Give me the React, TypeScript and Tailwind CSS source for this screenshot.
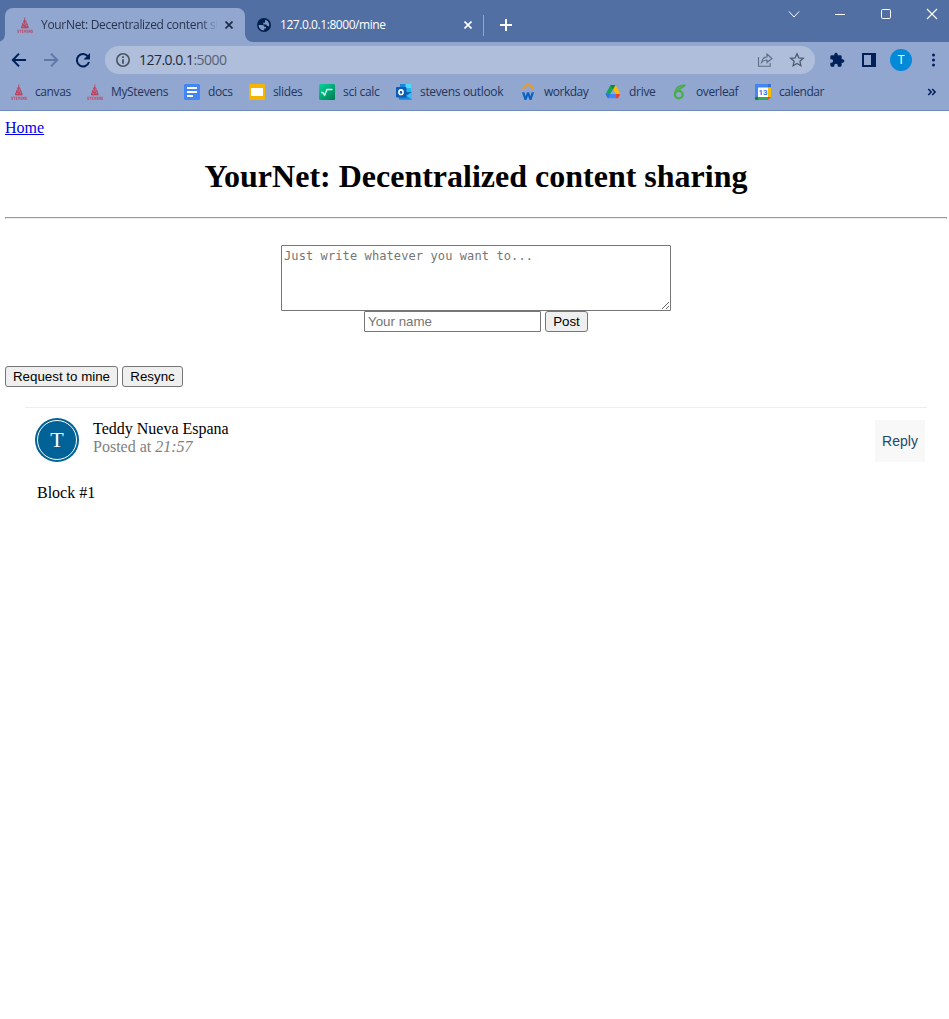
import React from "react";

function StevensIcon() {
  return (
    <svg width="16" height="16" viewBox="0 0 16 16" className="shrink-0">
      <g fill="#bb4563">
        <path d="M7.2 1.2L8.2 0v3l1.4 1.2v1.6l1.2 1.1v1.8l.8.9v1.3H4V9.4l1-1.1V6.6L6.2 5.8V4l1-.9z" />
        <path d="M4.3 11.2h7.2v.6H4.3z" opacity="0.6" />
        <g opacity="0.85">
          <path d="M.2 12.8h1.7v.7H1v.4h.9v1.8H.2V15h.9v-.4H.2zM2.4 12.8h2v.8h-.6v2.1H3v-2.1h-.6zM4.9 12.8h1.6v.7h-.8v.4h.7v.6h-.7v.5h.8v.7H4.9zM6.8 12.8h.8l.5 1.7.4-1.7h.8l-.8 2.9h-.9zM9.6 12.8h1.6v.7h-.8v.4h.7v.6h-.7v.5h.8v.7H9.6zM11.6 12.8h.7l.7 1.3v-1.3h.7v2.9H13l-.7-1.3v1.3h-.7zM14.1 12.8h1.7v.7h-.9v.4h.9v1.8h-1.7V15h.9v-.4h-.9z" />
        </g>
      </g>
      <path d="M6.3 5.6l1.2 2.2M8.8 4.4v3.2M5.6 9.4h1.6M9.4 8v1.6" stroke="#92a7d0" strokeWidth=".6" />
    </svg>
  );
}

function DocsIcon() {
  return (
    <svg width="16" height="16" className="shrink-0">
      <rect width="16" height="16" rx="1.2" fill="#4285f4" />
      <path d="M3 4h10M3 8h10M3 12h6" stroke="#fff" strokeWidth="2" />
    </svg>
  );
}

function SlidesIcon() {
  return (
    <svg width="16" height="16" className="shrink-0">
      <rect width="16" height="16" rx="1.2" fill="#f5b400" />
      <rect x="2" y="4" width="12" height="8" fill="#fff" />
    </svg>
  );
}

function CalcIcon() {
  return (
    <svg width="16" height="16" className="shrink-0">
      <defs>
        <linearGradient id="calc" x1="0" y1="0" x2="1" y2="1">
          <stop offset="0" stopColor="#00d898" />
          <stop offset="1" stopColor="#007a52" />
        </linearGradient>
      </defs>
      <rect width="16" height="16" rx="1.2" fill="url(#calc)" />
      <path d="M2.3 8.5h1.4l2 2.6L8 5.5h5.5" fill="none" stroke="#d8fff0" strokeWidth="1.3" />
    </svg>
  );
}

function OutlookIcon() {
  return (
    <svg width="16" height="16" className="shrink-0">
      <path d="M4 0h11v9H4z" fill="#1a86d8" />
      <path d="M9.5 0H15v4H9.5z" fill="#50d9ff" />
      <path d="M4 4h5.5v4H4z" fill="#0358a7" />
      <path d="M9.5 4H15v4H9.5z" fill="#28b4ee" />
      <path d="M3 15.8V11l7.5-1L16 15v.8z" fill="#1687dd" />
      <path d="M16 7.6v8L9.5 11.3z" fill="#38bdf2" />
      <path d="M9.5 8H16l-5.5 3.5z" fill="#1066b5" />
      <rect y="3" width="10.5" height="10.5" rx="1" fill="#0a5cb5" />
      <ellipse cx="5" cy="8.2" rx="2.1" ry="2.3" fill="none" stroke="#fff" strokeWidth="1.6" />
    </svg>
  );
}

function WorkdayIcon() {
  return (
    <svg width="16" height="16" className="shrink-0">
      <path d="M2.9 5.8C3.6 2.8 5.5 1 8 1s4.4 1.8 5.1 4.8" fill="none" stroke="#f49a18" strokeWidth="2" />
      <path d="M2 8.2h2.4l1.2 4.1L7 8.2h2.1l1.4 4.1 1.2-4.1H14L11.5 16H9.6L8 11.9 6.4 16H4.5z" fill="#0b62c4" />
    </svg>
  );
}

function DriveIcon() {
  return (
    <svg width="16" height="16" className="shrink-0">
      <path d="M5.5 1H8v4.4L3 14.2.6 10z" fill="#16a653" />
      <path d="M8 1h2.5l5 9h-4.9L8 5.4z" fill="#ffba00" />
      <path d="M5.5 1h5L8 5.4z" fill="#128444" />
      <path d="M.6 10h10v4.3H3z" fill="#4285f4" />
      <path d="M.6 10l2.4 4.3L5.4 10z" fill="#2a73e8" />
      <path d="M10.5 10h4.9L13 14.3h-2.5z" fill="#ea4335" />
      <path d="M8 5.4L10.6 10H5.3z" fill="#92a7d0" />
    </svg>
  );
}

function OverleafIcon() {
  return (
    <svg width="16" height="16" className="shrink-0">
      <ellipse cx="6.8" cy="10.6" rx="3.9" ry="3.8" fill="none" stroke="#47ad48" strokeWidth="2.2" />
      <path d="M2.9 10C2.8 6 5 1.2 12.8 1.2 11.8 3.6 8.2 3.6 6 6.2" fill="#47ad48" fillOpacity="0.35" stroke="#47ad48" strokeWidth="1.5" />
    </svg>
  );
}

function CalendarIcon() {
  return (
    <svg width="16" height="16" className="shrink-0">
      <path d="M0 1a1 1 0 0 1 1-1h14a1 1 0 0 1 1 1v3H0z" fill="#2f6fe0" />
      <path d="M0 1a1 1 0 0 1 1-1h12v13H0z" fill="#4285f4" />
      <path d="M13 3.3h3V13h-3z" fill="#fbbc04" />
      <path d="M0 13h13v3H1a1 1 0 0 1-1-1z" fill="#34a853" />
      <path d="M0 13h3v3H1a1 1 0 0 1-1-1z" fill="#188038" />
      <path d="M13 13h3l-3 3z" fill="#ea4335" />
      <path d="M3 3.5h10V13H3z" fill="#fff" />
      <text x="8" y="11" textAnchor="middle" fontSize="8" fontWeight="700" fontFamily="Roboto, sans-serif" fill="#2f75e8">13</text>
    </svg>
  );
}

const bookmarks = [
  { label: "canvas", icon: <StevensIcon />, style: "w-9 tracking-[-0.4px]" },
  { label: "MyStevens", icon: <StevensIcon />, style: "w-[57px] tracking-[-0.35px]" },
  { label: "docs", icon: <DocsIcon />, style: "w-[25px] tracking-[-0.35px]" },
  { label: "slides", icon: <SlidesIcon />, style: "w-[30px] tracking-[-0.35px]" },
  { label: "sci calc", icon: <CalcIcon />, style: "w-[37px] tracking-[-0.28px]" },
  { label: "stevens outlook", icon: <OutlookIcon />, style: "w-[84px] tracking-[-0.34px]" },
  { label: "workday", icon: <WorkdayIcon />, style: "w-[45px] tracking-[-0.5px]" },
  { label: "drive", icon: <DriveIcon />, style: "w-[27px] tracking-[-0.3px]" },
  { label: "overleaf", icon: <OverleafIcon />, style: "w-[43px] tracking-[-0.4px]" },
  { label: "calendar", icon: <CalendarIcon />, style: "w-[46px] tracking-[-0.42px]" },
];

function TabStrip() {
  return (
    <div className="flex h-[42px] bg-[#516fa3]">
      <svg width="5" height="42" className="shrink-0">
        <path d="M5 34a8 8 0 0 1-5 7.5v.5h5z" fill="#92a7d0" />
      </svg>
      <div className="mt-2 flex h-[34px] w-60 shrink-0 items-center rounded-t-lg bg-[#92a7d0] pl-3">
        <StevensIcon />
        <span className="ml-2 w-[176px] overflow-hidden whitespace-nowrap text-[12px] tracking-[-0.31px] text-[#26344f] [mask-image:linear-gradient(to_right,#000_160px,transparent_177px)]">
          YourNet: Decentralized content sharing
        </span>
        <svg width="8" height="8" className="ml-[8px]">
          <path d="M.5.5l7 7M7.5.5l-7 7" stroke="#1c2c4b" strokeWidth="1.7" />
        </svg>
      </div>
      <div className="mt-2 flex h-[34px] w-[238px] shrink-0 items-center">
        <svg width="8" height="34" className="shrink-0">
          <path d="M0 26a8 8 0 0 0 8 8H0z" fill="#92a7d0" />
        </svg>
        <svg width="14" height="14" className="ml-1 shrink-0">
          <circle cx="7" cy="7" r="7" fill="#00214f" />
          <path d="M1.6 7h3.6c1.2 0 2 .7 2 1.8h1.7v1.7H7.2v1.8C4 12.4 1.6 10 1.6 7zM8.2 1.8c2.4.5 4 2.7 4 5.2 0 .6-.1 1.2-.3 1.7-.3-.6-.8-1-1.5-1H9.6V6.4H6.3V4.8H8z" fill="#8298c3" />
        </svg>
        <span className="ml-[9px] w-[184px] whitespace-nowrap text-[12px] tracking-[-0.44px] text-white">127.0.0.1:8000/mine</span>
        <svg width="8" height="8" className="shrink-0">
          <path d="M.5.5l7 7M7.5.5l-7 7" stroke="#fff" strokeWidth="1.6" />
        </svg>
      </div>
      <div className="mt-[15px] h-[21px] w-px bg-[#94a8cf]" />
      <svg width="12" height="12" className="mt-[19px] ml-4">
        <path d="M6 0v12M0 6h12" stroke="#fff" strokeWidth="2" />
      </svg>
      <svg width="152" height="28" className="mr-[9px] ml-auto" fill="none" stroke="#fff">
        <path d="M4 11.5l5 5.5 5-5.5" transform="translate(-3 0)" />
        <path d="M47 14.5h10" />
        <rect x="93.5" y="9.5" width="9" height="9" rx="1.2" />
        <path d="M139 9l10 10M149 9l-10 10" strokeWidth="1.1" />
      </svg>
    </div>
  );
}

function Toolbar() {
  return (
    <div className="flex h-9 items-center bg-[#92a7d0]">
      <svg width="105" height="36" className="shrink-0" fill="none" stroke="#00205a" strokeWidth="2">
        <path d="M26 18H13M19 11.6L12.8 18l6.2 6.4" />
        <path d="M44 18h13M51 11.6l6.2 6.4-6.2 6.4" stroke="#6078a8" />
        <path d="M88.2 14.7A6.2 6.2 0 1 0 89 20" />
        <path d="M90 11v6.5h-6.5z" fill="#00205a" stroke="none" />
      </svg>
      <div className="flex h-7 w-[710px] shrink-0 items-center rounded-full bg-[#aebedb] pr-[10px] pl-[11px]">
        <svg width="14" height="14" fill="none" stroke="#4b5361" strokeWidth="1.6">
          <circle cx="7" cy="7" r="6.2" />
          <path d="M7 6.2v4.6M7 3.2v1.7" strokeWidth="1.8" />
        </svg>
        <span className="ml-[9px] -mt-px text-[14px] tracking-[-0.52px] text-[#222c3b]">
          127.0.0.1<span className="text-[#566176]">:5000</span>
        </span>
        <svg width="16" height="14" viewBox="0 0 16 14" className="ml-auto" fill="none" stroke="#5f6c82" strokeWidth="1.1">
          <path d="M1.5 4v9.3h11.7V10" />
          <path d="M4.5 9.5c.5-4 2.8-5.4 5.5-5.6V1l5 4.5-5 4V7C7.8 7 6 7.5 4.5 9.5z" />
        </svg>
        <svg width="16" height="16" viewBox="0 0 16 16" className="ml-4" fill="none" stroke="#4e5a70" strokeWidth="1.3">
          <path d="M8 1.8l1.8 4.1 4.5.4-3.4 3 1 4.4L8 11.4l-3.9 2.3 1-4.4-3.4-3 4.5-.4z" />
        </svg>
      </div>
      <svg width="16" height="16" viewBox="0 0 24 24" className="ml-[14px] shrink-0" fill="#00205a">
        <path d="M20.5 11H19V7a2 2 0 0 0-2-2h-4V3.5a2.5 2.5 0 0 0-5 0V5H4a2 2 0 0 0-2 2v3.8h1.5a2.7 2.7 0 0 1 0 5.4H2V20a2 2 0 0 0 2 2h3.8v-1.5a2.7 2.7 0 0 1 5.4 0V22H17a2 2 0 0 0 2-2v-4h1.5a2.5 2.5 0 0 0 0-5z" />
      </svg>
      <svg width="14" height="14" className="ml-[17px] shrink-0">
        <path fillRule="evenodd" d="M0 0h14v14H0zM2 2v10h7V2z" fill="#00205a" />
      </svg>
      <div className="ml-[14px] flex size-[22px] shrink-0 items-center justify-center rounded-full bg-[#0289d7] font-[Roboto] text-[12px] text-white">T</div>
      <svg width="4" height="14" className="ml-[19px] shrink-0" fill="#00205a">
        <circle cx="2.5" cy="2" r="1.5" />
        <circle cx="2.5" cy="7" r="1.5" />
        <circle cx="2.5" cy="12" r="1.5" />
      </svg>
    </div>
  );
}

function BookmarkBar() {
  return (
    <div className="flex h-8 items-center gap-4 bg-[#92a7d0] pb-1 pl-[11px]">
      {bookmarks.map((b) => (
        <div key={b.label} className="flex shrink-0 items-center gap-2">
          {b.icon}
          <span className={`text-[12px] leading-4 whitespace-nowrap text-[#23355c] ${b.style}`}>{b.label}</span>
        </div>
      ))}
      <svg width="10" height="8" className="mr-3 ml-auto shrink-0" fill="none" stroke="#00205a" strokeWidth="1.6">
        <path d="M1.3 1L4.2 4 1.3 7M5.2 1l2.9 3-2.9 3" />
      </svg>
    </div>
  );
}

const buttonStyle =
  "h-[21px] rounded-[3px] border border-[#767676] bg-[#efefef] font-['Liberation_Sans',sans-serif] text-[13.333px] leading-[17px] text-black whitespace-nowrap";

export default function App() {
  return (
    <div className="h-[1019px] w-[949px] overflow-hidden bg-white">
      <header className="h-[111px] border-b border-[#6d89b9] bg-[#92a7d0] font-['Open_Sans',sans-serif]">
        <TabStrip />
        <Toolbar />
        <BookmarkBar />
      </header>
      <main className="pt-[8px] pr-[2px] pl-[5px] font-['Liberation_Serif',serif] text-[16px] leading-[18px] text-black">
        <a href="#" className="block w-fit text-[#0000ee] underline">Home</a>
        <h1 className="mt-[21px] text-center text-[32px] leading-[37px] font-bold">YourNet: Decentralized content sharing</h1>
        <hr className="mt-[22px] h-[2px] border border-[#9a9a9a] border-b-[#eeeeee]" />
        <form className="mt-[26px] flex flex-col items-center" onSubmit={(e) => e.preventDefault()}>
          <textarea
            placeholder="Just write whatever you want to..."
            className="block h-[66px] w-[390px] resize rounded-[1px] border border-[#767676] p-[2px] font-['DejaVu_Sans_Mono',monospace] text-[12px] leading-[16px] tracking-[0.1px] placeholder:text-[#757575]"
          />
          <div className="flex gap-1">
            <input
              placeholder="Your name"
              className="h-[21px] w-[177px] rounded-[1px] border border-[#767676] px-[3px] font-['Liberation_Sans',sans-serif] text-[13.333px] leading-[15px] placeholder:text-[#757575]"
            />
            <button className={`${buttonStyle} w-[43px]`}>Post</button>
          </div>
        </form>
        <div className="mt-[34px] flex gap-1">
          <button className={`${buttonStyle} w-[113px]`}>Request to mine</button>
          <button className={`${buttonStyle} w-[61px]`}>Resync</button>
        </div>
        <article className="mt-5 mr-5 ml-5 border-t border-[#eeeeee]">
          <div className="flex pt-[10px] pr-[2px] pl-[10px]">
            <div className="flex size-11 items-center justify-center rounded-full bg-[#006297] p-[2px]">
              <div className="flex size-10 items-center justify-center rounded-full border border-white text-[22px] text-white">T</div>
            </div>
            <div className="ml-[14px] pt-[2px]">
              <div>Teddy Nueva Espana</div>
              <div className="text-[#808080]">Posted at <i>21:57</i></div>
            </div>
            <button className="mt-[2px] ml-auto h-[42px] w-[50px] bg-[#f8f8f8] font-['Liberation_Sans',sans-serif] text-[14px] text-[#24476a]">Reply</button>
          </div>
          <p className="mt-[22px] ml-3">Block #1</p>
        </article>
      </main>
    </div>
  );
}
